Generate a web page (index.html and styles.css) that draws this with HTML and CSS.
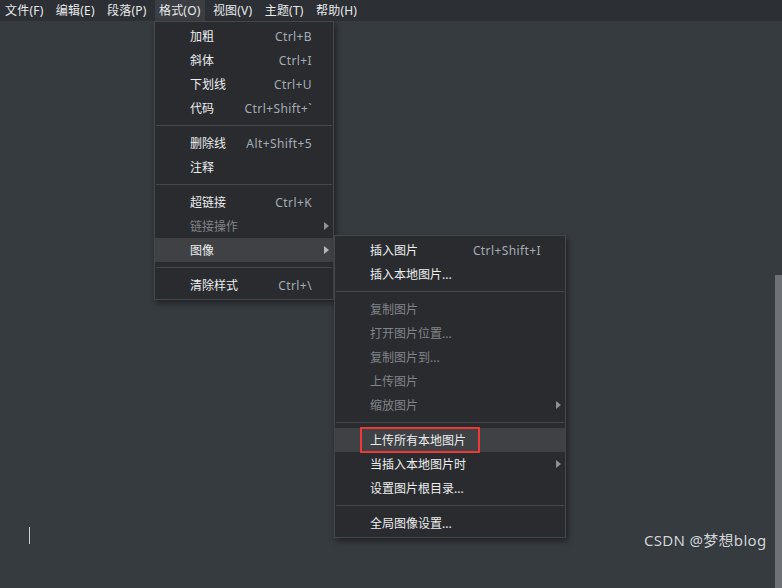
FILE: index.html
```html
<!DOCTYPE html>
<html lang="zh-CN">
<head>
<meta charset="utf-8">
<link rel="stylesheet" href="styles.css">
</head>
<body>
<div class="app">
  <nav class="menubar">
    <span class="mb-item">文件(F)</span>
    <span class="mb-item">编辑(E)</span>
    <span class="mb-item">段落(P)</span>
    <span class="mb-item active">格式(O)</span>
    <span class="mb-item">视图(V)</span>
    <span class="mb-item">主题(T)</span>
    <span class="mb-item">帮助(H)</span>
  </nav>
  <main class="editor">
    <span class="caret"></span>
  </main>
  <div class="scrollbar"></div>
  <div class="watermark">CSDN @梦想blog</div>

  <div class="menu format-menu">
    <div class="row"><span class="label">加粗</span><span class="key">Ctrl+B</span></div>
    <div class="row"><span class="label">斜体</span><span class="key">Ctrl+I</span></div>
    <div class="row"><span class="label">下划线</span><span class="key">Ctrl+U</span></div>
    <div class="row"><span class="label">代码</span><span class="key">Ctrl+Shift+`</span></div>
    <div class="sep"></div>
    <div class="row"><span class="label">删除线</span><span class="key">Alt+Shift+5</span></div>
    <div class="row"><span class="label">注释</span><span class="key"></span></div>
    <div class="sep"></div>
    <div class="row"><span class="label">超链接</span><span class="key">Ctrl+K</span></div>
    <div class="row disabled"><span class="label">链接操作</span><span class="arrow"></span></div>
    <div class="row hover"><span class="label">图像</span><span class="arrow"></span></div>
    <div class="sep"></div>
    <div class="row"><span class="label">清除样式</span><span class="key">Ctrl+\</span></div>
  </div>

  <div class="menu image-menu">
    <div class="row"><span class="label">插入图片</span><span class="key">Ctrl+Shift+I</span></div>
    <div class="row"><span class="label">插入本地图片...</span></div>
    <div class="sep"></div>
    <div class="row disabled"><span class="label">复制图片</span></div>
    <div class="row disabled"><span class="label">打开图片位置...</span></div>
    <div class="row disabled"><span class="label">复制图片到...</span></div>
    <div class="row disabled"><span class="label">上传图片</span></div>
    <div class="row disabled"><span class="label">缩放图片</span><span class="arrow"></span></div>
    <div class="sep"></div>
    <div class="row hover"><span class="label">上传所有本地图片</span><span class="redbox"></span></div>
    <div class="row"><span class="label">当插入本地图片时</span><span class="arrow"></span></div>
    <div class="row"><span class="label">设置图片根目录...</span></div>
    <div class="sep"></div>
    <div class="row"><span class="label">全局图像设置...</span></div>
  </div>
</div>
</body>
</html>
```

FILE: styles.css
```css
* { box-sizing: border-box; }
html, body {
  margin: 0;
  padding: 0;
  width: 782px;
  height: 588px;
  overflow: hidden;
  background: #363b40;
  font-family: "Noto Sans", "Noto Sans CJK SC", sans-serif;
  font-size: 12px;
}
.app {
  position: relative;
  width: 782px;
  height: 588px;
  display: flex;
  flex-direction: column;
}
.menubar {
  height: 21px;
  background: #2c2f33;
  display: flex;
  align-items: stretch;
  padding-left: 1px;
  gap: 4.4px;
}
.mb-item {
  color: #e8eaec;
  padding: 0 4px;
  line-height: 21px;
  white-space: nowrap;
  letter-spacing: 0.2px;
}
.mb-item.active {
  background: #3b3e42;
}
.editor {
  flex: 1;
  background: #363b40;
  position: relative;
}
.caret {
  position: absolute;
  left: 29px;
  top: 506px;
  width: 1px;
  height: 17px;
  background: #c9cdd1;
}
.scrollbar {
  position: absolute;
  right: 0;
  top: 275px;
  width: 7px;
  bottom: 0;
  background: #6e7276;
}
.watermark {
  position: absolute;
  left: 644px;
  top: 530px;
  color: #d4d7da;
  font-size: 15px;
  line-height: 21px;
  letter-spacing: 0.3px;
  text-shadow: 0 0 1px rgba(0,0,0,0.4);
}
.menu {
  position: absolute;
  background: #2a2b2e;
  border: 1px solid #45474b;
  padding: 2px 0;
  box-shadow: 2px 3px 6px rgba(0,0,0,0.45);
}
.format-menu {
  left: 154px;
  top: 21px;
  width: 180px;
}
.image-menu {
  left: 334px;
  top: 235px;
  width: 232px;
}
.row {
  position: relative;
  height: 24px;
  display: flex;
  align-items: center;
  padding-left: 35px;
  padding-right: 21px;
  color: #eceef0;
  white-space: nowrap;
}
.row .label { flex: 1; }
.row .key {
  color: #a3adb5;
  letter-spacing: 0.4px;
}
.row.disabled { color: #80858a; }
.row.hover { background: #3f4144; }
.format-menu .row { padding-right: 21px; }
.image-menu .row { padding-right: 24px; }
.arrow {
  position: absolute;
  right: 4px;
  top: 8px;
  width: 0;
  height: 0;
  border-top: 4px solid transparent;
  border-bottom: 4px solid transparent;
  border-left: 5px solid #8e9296;
}
.row.hover .arrow { border-left-color: #b5b8bb; }
.sep {
  height: 11px;
  display: flex;
  align-items: center;
  padding: 0 1px;
}
.sep::before {
  content: "";
  flex: 1;
  height: 1px;
  background: #45474b;
}
.redbox {
  position: absolute;
  left: 25px;
  top: -1px;
  width: 120px;
  height: 26px;
  border: 2px solid #ec3b36;
}
```
